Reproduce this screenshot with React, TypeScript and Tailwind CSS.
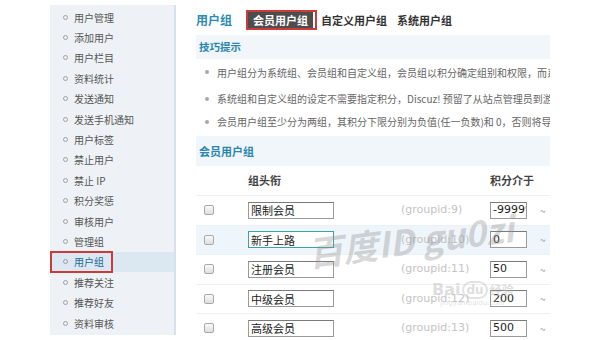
import React from 'react';

const menu = [
  '用户管理', '添加用户', '用户栏目', '资料统计', '发送通知', '发送手机通知', '用户标签', '禁止用户',
  '禁止 IP', '积分奖惩', '审核用户', '管理组', '用户组', '推荐关注', '推荐好友', '资料审核',
];

const tips = [
  '用户组分为系统组、会员组和自定义组，会员组以积分确定组别和权限，而系统组和自定义组',
  '系统组和自定义组的设定不需要指定积分，Discuz! 预留了从站点管理员到游客等的系统组',
  '会员用户组至少分为两组，其积分下限分别为负值(任一负数)和 0，否则将导致',
];

const rows = [
  { name: '限制会员', id: 9, min: '-99999' },
  { name: '新手上路', id: 10, min: '0' },
  { name: '注册会员', id: 11, min: '50' },
  { name: '中级会员', id: 12, min: '200' },
  { name: '高级会员', id: 13, min: '500' },
];

const font = { fontFamily: '"Noto Sans CJK SC", "DejaVu Sans", sans-serif' };
const latin = { fontFamily: '"DejaVu Sans", sans-serif' };

const Checkbox = () => (
  <span className="block w-[10px] h-[10px] rounded-[2px] border border-[#a9a9a9] bg-gradient-to-b from-[#fafafa] to-[#dedede]" />
);

export default function App() {
  return (
    <div className="relative w-[600px] h-[340px] bg-white flex overflow-hidden text-[#333]" style={font}>
      <div className="w-[50px] shrink-0" />

      {/* Sidebar */}
      <div className="w-[126px] shrink-0 mt-[5px] h-[330px] bg-[#eef2f6] border-r-2 border-[#d6e1ea] pt-[2px]">
        {menu.map((m) => {
          const active = m === '用户组';
          return (
            <div
              key={m}
              className={`relative h-[20.4px] flex items-center pl-[13px] text-[10px] ${active ? 'bg-[#dbe7f1] text-[#1d6b97]' : 'text-[#555]'}`}
            >
              <span className="w-[5px] h-[5px] rounded-full border border-[#a0a0a0] mr-[6px]" />
              {m}
              {active && (
                <span className="absolute left-0 top-[-1px] w-[63px] h-[22px] border-2 border-[#cc3a3a]" />
              )}
            </div>
          );
        })}
      </div>

      {/* Main */}
      <div className="w-[374px] shrink-0 pl-[20px] overflow-hidden">
        <div className="flex items-center h-[22px] mt-[9px]">
          <span className="text-[12px] font-bold text-[#2a8bb3] w-[50px]">用户组</span>
          <span className="border-2 border-[#cc3a3a] bg-white pr-[2px]">
            <span className="block bg-[#4d4d4d] text-white text-[11px] font-bold px-[5px] leading-[16px]">会员用户组</span>
          </span>
          <span className="text-[11px] font-bold text-[#333] ml-[4px]">自定义用户组</span>
          <span className="text-[11px] font-bold text-[#333] ml-[10px]">系统用户组</span>
        </div>

        {/* 技巧提示 */}
        <div className="mt-[4px] h-[24px] bg-[#f1f6fa] flex items-center pl-[3px] w-[354px]">
          <span className="text-[10.5px] font-bold text-[#2a86ad]">技巧提示</span>
        </div>

        <div className="w-[354px] text-[10px] text-[#666] overflow-hidden">
          {tips.map((t, i) => (
            <div key={i} className={`flex items-center whitespace-nowrap ${i === 0 ? 'h-[26px]' : i === 1 ? 'h-[27px]' : 'h-[19px]'}`}>
              <span className="shrink-0 w-[4px] h-[4px] rounded-full bg-[#a8a8a8] ml-[9px] mr-[8px]" />
              {t}
            </div>
          ))}
        </div>

        {/* 会员用户组 */}
        <div className="mt-[5px] h-[30px] bg-[#f1f6fa] flex items-center pl-[3px] w-[354px]">
          <span className="text-[11px] font-bold text-[#2a86ad]">会员用户组</span>
        </div>

        <div className="w-[354px]">
          <div className="flex items-center h-[29px] text-[11px] font-bold text-[#444]">
            <span className="w-[52px]" />
            <span className="w-[242px]">组头衔</span>
            <span>积分介于</span>
          </div>
          {rows.map((r, i) => (
            <div
              key={r.id}
              className={`flex items-center h-[29.5px] border-t border-[#eef0f2] ${i === 1 ? 'bg-[#eef5fb]' : ''}`}
            >
              <span className="w-[52px] pl-[8px]"><Checkbox /></span>
              <span
                className={`w-[86px] h-[17px] flex items-center px-[2px] text-[11px] text-[#222] bg-white border ${i === 1 ? 'border-[#3aa3a8]' : 'border-[#9a9a9a] border-t-[#7a7a7a]'}`}
              >
                {r.name}
              </span>
              <span className="w-[156px] pl-[67px] text-[11px] text-[#c4c4c4] whitespace-nowrap" style={latin}>
                (groupid:{r.id})
              </span>
              <span
                className="w-[37px] h-[17px] flex items-center px-[2px] text-[11px] text-[#222] bg-white border border-[#9a9a9a] border-t-[#7a7a7a] overflow-hidden whitespace-nowrap"
                style={latin}
              >
                {r.min}
              </span>
              <span className="ml-[13px] text-[10px] text-[#999]">~</span>
            </div>
          ))}
        </div>
      </div>

      {/* watermark */}
      <div
        className="absolute left-[308px] top-[226px] text-[35px] italic font-semibold text-[#8f8f8f]/35 whitespace-nowrap -rotate-[7deg] origin-left"
        style={font}
      >
        百度ID gu0zi
      </div>
      <div className="absolute left-[432px] top-[278px] flex items-center gap-[2px] text-[#bdbdbd]/50 text-[16px] font-bold" style={latin}>
        <span>Bai</span>
        <span className="rounded-full border-2 border-[#c5c5c5]/50 px-[2px] text-[12px] leading-[14px]">du</span>
        <span className="text-[12px]" style={font}>经验</span>
      </div>
      <div className="absolute left-[440px] top-[298px] text-[7px] text-[#cccccc]/60" style={latin}>
        jingyan.baidu.com
      </div>
    </div>
  );
}
